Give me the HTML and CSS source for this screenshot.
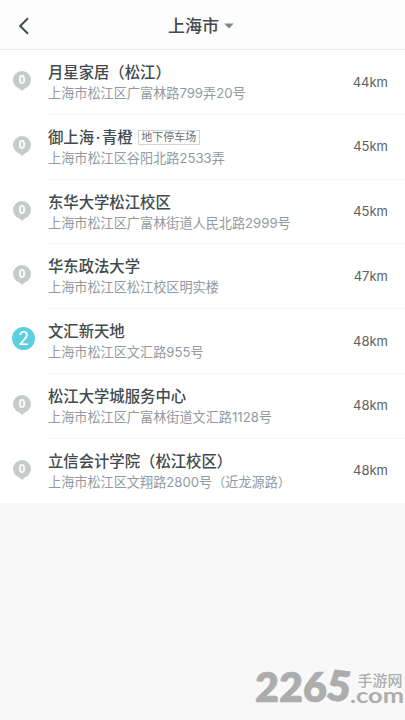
FILE: index.html
```
<!DOCTYPE html>
<html lang="zh-CN">
<head>
<meta charset="utf-8">
<title>上海市</title>
<link rel="stylesheet" href="styles.css">
</head>
<body>
<header class="bar">
  <svg class="back" width="12" height="18" viewBox="0 0 12 18"><path d="M10 1.2 2.2 9l7.8 7.8"/></svg>
  <h1 class="city">上海市</h1>
  <svg class="caret" width="10" height="6" viewBox="0 0 10 6"><path d="M.3 .5h9.4L5 5.6z"/></svg>
</header>
<ul class="list">
  <li class="row"><span class="pin">0</span><div class="info"><div class="name">月星家居（松江）</div><div class="addr">上海市松江区广富林路799弄20号</div></div><span class="dist">44km</span></li>
  <li class="row"><span class="pin">0</span><div class="info"><div class="name">御上海<span class="dot">·</span>青橙<span class="tag">地下停车场</span></div><div class="addr">上海市松江区谷阳北路2533弄</div></div><span class="dist">45km</span></li>
  <li class="row"><span class="pin">0</span><div class="info"><div class="name">东华大学松江校区</div><div class="addr">上海市松江区广富林街道人民北路2999号</div></div><span class="dist">45km</span></li>
  <li class="row"><span class="pin">0</span><div class="info"><div class="name">华东政法大学</div><div class="addr">上海市松江区松江校区明实楼</div></div><span class="dist">47km</span></li>
  <li class="row"><span class="pin active">2</span><div class="info"><div class="name">文汇新天地</div><div class="addr">上海市松江区文汇路955号</div></div><span class="dist">48km</span></li>
  <li class="row"><span class="pin">0</span><div class="info"><div class="name">松江大学城服务中心</div><div class="addr">上海市松江区广富林街道文汇路1128号</div></div><span class="dist">48km</span></li>
  <li class="row"><span class="pin">0</span><div class="info"><div class="name">立信会计学院（松江校区）</div><div class="addr">上海市松江区文翔路2800号（近龙源路）</div></div><span class="dist">48km</span></li>
</ul>
<svg class="mark" width="155" height="80" viewBox="250 640 155 80">
  <g class="digits">
    <text x="255" y="702" textLength="72" lengthAdjust="spacingAndGlyphs">226</text>
    <text x="327" y="701" textLength="24" lengthAdjust="spacingAndGlyphs" transform="rotate(8 339 686)">5</text>
  </g>
  <text class="cn" x="357.5" y="685.5" textLength="45">手游网</text>
  <text class="com" x="350" y="702.5" textLength="54" lengthAdjust="spacingAndGlyphs">.com</text>
</svg>
</body>
</html>
```
FILE: styles.css
```
* { box-sizing: border-box; }
body {
  margin: 0;
  height: 720px;
  overflow: hidden;
  position: relative;
  background: #f8f8f8;
  color: #424a4e;
  font-family: Inter, "Noto Sans CJK SC", sans-serif;
}
.bar {
  height: 50px;
  display: flex;
  align-items: center;
  padding: 2px 0 0 18px;
  background: #fdfdfd;
  border-bottom: 1px solid #e9ebeb;
}
.back { fill: none; stroke: #414a4d; stroke-width: 2; }
.city { margin: 0 0 0 138px; font-size: 17px; line-height: 24px; font-weight: 500; }
.caret { margin-left: 5px; fill: #7c8789; }
.list { margin: 0; padding: 0; list-style: none; background: #fff; }
.row { display: flex; height: 64.75px; padding-left: 12px; }
.pin {
  position: relative;
  width: 18px;
  height: 18px;
  margin: 21px 18px 0 1px;
  border-radius: 50%;
  background: #c5caca;
  color: #fff;
  font-family: "Liberation Sans", sans-serif;
  font-size: 12.5px;
  font-weight: 700;
  line-height: 19px;
  text-align: center;
}
.pin::after {
  content: "";
  position: absolute;
  left: 6px;
  top: 17px;
  border: 3px solid transparent;
  border-top-color: #c5caca;
  border-bottom: 0;
}
.pin.active {
  width: 23px;
  height: 23px;
  margin: 18px 14px 0 0;
  background: #5dd0df;
  font-family: Inter, sans-serif;
  font-size: 18px;
  font-weight: 400;
  line-height: 23px;
}
.pin.active::after { display: none; }
.info {
  flex: 1;
  margin-left: -1px;
  padding-top: 12px;
  border-bottom: 1px solid #f6f7f7;
}
.row:last-child .info, .row:last-child .dist { border-bottom: 0; }
.name {
  display: flex;
  align-items: center;
  height: 21px;
  font-size: 15.35px;
  line-height: 21px;
  font-weight: 500;
  white-space: nowrap;
}
.dot { width: 8px; text-align: center; }
.tag {
  margin-left: 5px;
  width: 62px;
  height: 15px;
  border: 1px solid #cfd4d5;
  color: #697276;
  font-size: 11px;
  line-height: 13px;
  font-weight: 400;
  text-align: center;
}
.addr { font-size: 13.15px; line-height: 20px; color: #929a9f; white-space: nowrap; }
.dist {
  width: 57px;
  padding: 21.5px 17px 0 0;
  border-bottom: 1px solid #f6f7f7;
  font-size: 13px;
  line-height: 20px;
  color: #5b6265;
  text-align: right;
}
.mark { position: absolute; left: 250px; top: 640px; fill: #adadad; }
.digits { font: 800 42px Lato, sans-serif; stroke: #adadad; stroke-width: .6; }
.cn { font: 500 15px "Noto Sans CJK SC", sans-serif; }
.com { font: 700 21px Lato, sans-serif; }
```
